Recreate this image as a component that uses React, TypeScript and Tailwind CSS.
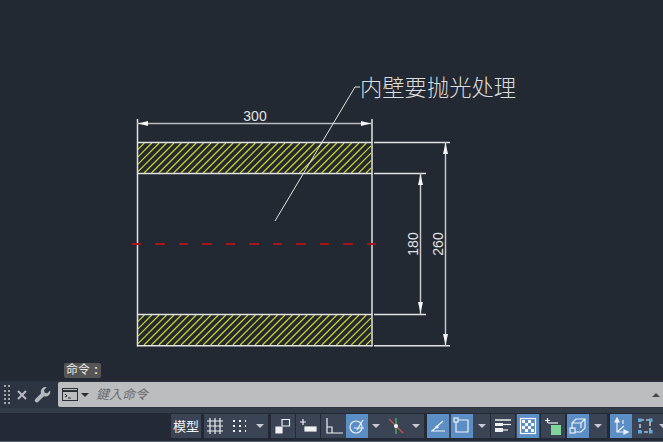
import type { ReactNode } from 'react'

const font = "font-['Liberation_Sans','Noto_Sans_CJK_TC',sans-serif]"
const cjk = "'Noto Sans CJK TC', sans-serif"

const dashes = [
  [132, 141], [155, 165], [179, 188], [202, 212], [226, 235], [249, 259],
  [273, 282], [296, 306], [320, 329], [343, 353], [367, 376],
]

function hatchLines(y1: number, y2: number) {
  const lines = []
  const h = y2 - y1
  for (let x = 137; x < 372 + h; x += 7.4) {
    let sx = x - h
    let sy = y2
    let ex = x
    let ey = y1
    if (sx < 138) {
      sy = y2 - (138 - sx)
      sx = 138
    }
    if (ex > 371) {
      ey = y1 + (ex - 371)
      ex = 371
    }
    if (sx < ex) lines.push(`M${sx} ${sy}L${ex} ${ey}`)
  }
  return lines.join('')
}

function Drawing() {
  return (
    <svg width="663" height="362" viewBox="0 0 663 362" className="block">
      {/* hatch */}
      <path d={hatchLines(143, 173)} stroke="#d6d622" strokeWidth="1.100" fill="none" />
      <path d={hatchLines(315, 345)} stroke="#d6d622" strokeWidth="1.100" fill="none" />
      {/* outline */}
      <g stroke="#e2e2e2" strokeWidth="1.500" fill="none">
        <path d="M137.500 119V346.500M372 119V346.500" />
        <path d="M137 142.500H372M137 173.500H372M137 314.500H372M137 345.700H372" />
        <path d="M374 142.500H450M374 173.500H426M374 314.500H426M374 345.700H450" />
        <path d="M137 123.500H372" stroke="#bcbcbc" />
        <path d="M420.500 173V314M445.500 142V346" stroke="#c8c8c8" />
        <path d="M275 221L355 87H360" strokeWidth="1" />
      </g>
      {/* arrows */}
      <g fill="#f4f4f4">
        <path d="M138 123.500L148 121V126Z" />
        <path d="M371 123.500L361 121V126Z" />
        <path d="M420.500 174L418 185H423Z" />
        <path d="M420.500 313L418 302H423Z" />
        <path d="M445.500 143L443 154H448Z" />
        <path d="M445.500 345L443 334H448Z" />
      </g>
      {/* center line */}
      <g stroke="#a81418" strokeWidth="2">
        {dashes.map(([a, b]) => (
          <line key={a} x1={a} x2={b} y1="244" y2="244" />
        ))}
      </g>
      <g fill="#e2e2e2" fontFamily="'Liberation Sans', sans-serif" fontSize="14">
        <text x="255" y="121" textAnchor="middle">300</text>
        <text transform="translate(418 244) rotate(-90)" textAnchor="middle">180</text>
        <text transform="translate(443 244) rotate(-90)" textAnchor="middle">260</text>
      </g>
      <text x="360" y="96" fill="#dcdcdc" fontSize="22.300" fontFamily={cjk} fontWeight="300">
        内壁要抛光处理
      </text>
    </svg>
  )
}

function Arrow({ w = 'w-[20px]' }: { w?: string }) {
  return (
    <div className={`${w} h-full flex items-center justify-center shrink-0`}>
      <div className="w-0 h-0 border-x-[4px] border-x-transparent border-t-[4px] border-t-[#c8ccd2]" />
    </div>
  )
}

function Icon({ children, active, w = 'w-[23px]' }: { children: ReactNode; active?: boolean; w?: string }) {
  return (
    <div className={`${w} h-full flex items-center justify-center shrink-0 ${active ? 'bg-[#5b8ec4]' : ''}`}>
      <svg width="18" height="18" viewBox="0 0 18 18" fill="none" stroke="#eef0f2" strokeWidth="1.200">
        {children}
      </svg>
    </div>
  )
}

function Group({ children, w }: { children: ReactNode; w: string }) {
  return <div className={`${w} h-full bg-[#3a4454] flex items-center shrink-0`}>{children}</div>
}

function StatusBar() {
  return (
    <div className="h-[29px] bg-[#232a35] flex items-stretch pl-[171px] pt-[1px] pb-[3px] overflow-hidden border-b border-[#59626e]">
      <div className="w-[30px] h-full bg-[#3a4454] mr-[3px] flex items-center justify-center text-[13px] text-[#f2f4f6] leading-none shrink-0">
        模型
      </div>
      <Group w="w-[64px] mr-[3px]">
        <Icon w="w-[22px]">
          <path d="M1 4H17M1 9H17M1 14H17M4 1V17M9 1V17M14 1V17" />
        </Icon>
        <Icon w="w-[26px]">
          <path strokeWidth="2" strokeDasharray="2 4" d="M3 4H16M3 9H16M3 14H16" />
        </Icon>
        <Arrow w="w-[16px]" />
      </Group>
      <Group w="w-[24px] mr-[1px]">
        <Icon w="w-[24px]">
          <path d="M8 9V2.500H15.500V9H8" />
          <path d="M2 10H8V16H2Z" fill="#eef0f2" />
        </Icon>
      </Group>
      <Group w="w-[24px] mr-[1px]">
        <Icon w="w-[24px]">
          <path d="M1 5H7M4 2V8" />
          <rect x="6" y="10" width="11" height="4" fill="#eef0f2" />
        </Icon>
      </Group>
      <Group w="w-[103px] mr-[3px]">
        <Icon w="w-[25px]">
          <path d="M2 1V16H18M2 10H7V16" />
        </Icon>
        <Icon active w="w-[22px]">
          <circle cx="8" cy="10" r="6" />
          <path d="M6 11H16M9 13L15 3" />
        </Icon>
        <Arrow w="w-[16px]" />
        <Icon w="w-[24px]">
          <path stroke="#d05050" d="M2 2L16 16" />
          <path stroke="#50c060" d="M9 1V17" />
          <circle cx="9" cy="9" r="1.500" fill="#eee" />
        </Icon>
        <Arrow w="w-[16px]" />
      </Group>
      <Group w="w-[63px] mr-[1px]">
        <Icon active w="w-[22px]">
          <path d="M2 14H16M3 14L14 4" />
          <circle cx="8" cy="10" r="1" fill="#eee" />
        </Icon>
        <div className="w-[2px]" />
        <Icon active w="w-[22px]">
          <path d="M3 3H15V15H3Z" />
          <rect x="1" y="1" width="4" height="4" fill="#5b8ec4" />
        </Icon>
        <Arrow w="w-[17px]" />
      </Group>
      <Group w="w-[24px] mr-[1px]">
        <Icon w="w-[24px]">
          <path strokeWidth="1.500" d="M1 3H17" />
          <path strokeWidth="3" d="M1 7.500H9" />
          <path d="M9 7.500H17" />
          <path strokeWidth="4" d="M1 13H9" />
          <path d="M9 13H14" />
        </Icon>
      </Group>
      <Group w="w-[24px] mr-[1px] pl-[1px]">
        <Icon active w="w-[22px]">
          <rect x="1.500" y="1.500" width="15" height="15" stroke="#fff" />
          <path stroke="#fff" strokeWidth="3" strokeDasharray="3 3" d="M3 4.500H15M6 7.500H15M3 10.500H15M6 13.500H15" />
        </Icon>
      </Group>
      <Group w="w-[24px] mr-[2px]">
        <Icon w="w-[24px]">
          <path d="M1 3.500H6M3.500 1V6" />
          <path d="M4 6H14" />
          <rect x="7" y="8" width="10" height="10" fill="#7fd49a" stroke="none" />
        </Icon>
      </Group>
      <Group w="w-[40px] mr-[3px]">
        <Icon active w="w-[22px]">
          <path d="M3 12V6L7 2H16V11L12 15H6M7 6H12V11M3 6H12L16 2" />
          <rect x="1" y="11" width="5" height="5" />
        </Icon>
        <Arrow w="w-[18px]" />
      </Group>
      <Group w="w-[59px]">
        <Icon active w="w-[22px]">
          <path d="M5 3V15H16M5 15L12 9" />
          <path d="M5 1L3 5H7ZM16 15L12 13V17Z" fill="#eef0f2" />
          <path d="M11 3V7" />
        </Icon>
        <div className="w-[1px]" />
        <Icon w="w-[24px]">
          <path strokeDasharray="4 2" d="M4 3H14V15H4Z" />
          <rect x="2" y="1.500" width="3.500" height="3.500" fill="#5aaee8" stroke="none" />
          <rect x="13" y="1.500" width="3.500" height="3.500" fill="#5aaee8" stroke="none" />
          <rect x="2" y="13" width="3.500" height="3.500" fill="#5aaee8" stroke="none" />
          <rect x="13" y="13" width="3.500" height="3.500" fill="#5aaee8" stroke="none" />
        </Icon>
        <Arrow w="w-[12px]" />
      </Group>
    </div>
  )
}

export default function App() {
  return (
    <div className={`w-[663px] h-[442px] overflow-hidden bg-[#222933] relative flex flex-col ${font}`}>
      <div className="h-[381px] shrink-0">
        <Drawing />
      </div>

      {/* tooltip 命令 */}
      <div className="absolute left-[64px] top-[363px] w-[37px] h-[15px] bg-[#555555] rounded-[2px] text-[12px] leading-[15px] text-[#e8e8e8] pl-[2px]">
        命令<span className="ml-[4px] font-bold">:</span>
      </div>

      {/* command line */}
      <div className="h-[27px] shrink-0 bg-[#2c3442] flex items-center">
        <div className="w-[58px] h-full flex items-center pl-[4px] gap-[6px] shrink-0">
          <div className="w-[6px] h-[19px] border-x-2 border-dotted border-[#a0a4a8]" />
          <svg width="12" height="12" viewBox="0 0 12 12" stroke="#b8bcc0" strokeWidth="2">
            <path d="M2 2L10 10M10 2L2 10" />
          </svg>
          <svg width="17" height="17" viewBox="0 0 24 24" fill="#b4b8bc">
            <path d="M22.700 6.300a6.500 6.500 0 0 1-8.600 8L6 22.400a2.800 2.800 0 0 1-4-4l8-8.200a6.500 6.500 0 0 1 8.100-8.500l-4 4 1 3.700 3.700 1z" />
          </svg>
        </div>
        <div className="flex-1 h-[25px] bg-[#bcbdbf] rounded-l-[2px] flex items-center pl-[4px]">
          <svg width="16" height="13" viewBox="0 0 16 13" fill="none" stroke="#2b2f35">
            <rect x="0.500" y="0.500" width="15" height="12" />
            <path d="M0 3H16" strokeWidth="2" />
            <path d="M3 6L5 8L3 9M6 10H9" />
          </svg>
          <div className="w-0 h-0 ml-[3px] border-x-[4px] border-x-transparent border-t-[4px] border-t-[#2b2f35]" />
          <span className="ml-[7px] text-[13px] italic text-[#6a6c70] leading-none">鍵入命令</span>
          <div className="ml-auto mr-[3px] w-0 h-0 border-x-[4px] border-x-transparent border-b-[4px] border-b-[#44484e]" />
        </div>
      </div>

      <div className="h-[5px] shrink-0 bg-[#323b48]" />
      <StatusBar />
    </div>
  )
}
